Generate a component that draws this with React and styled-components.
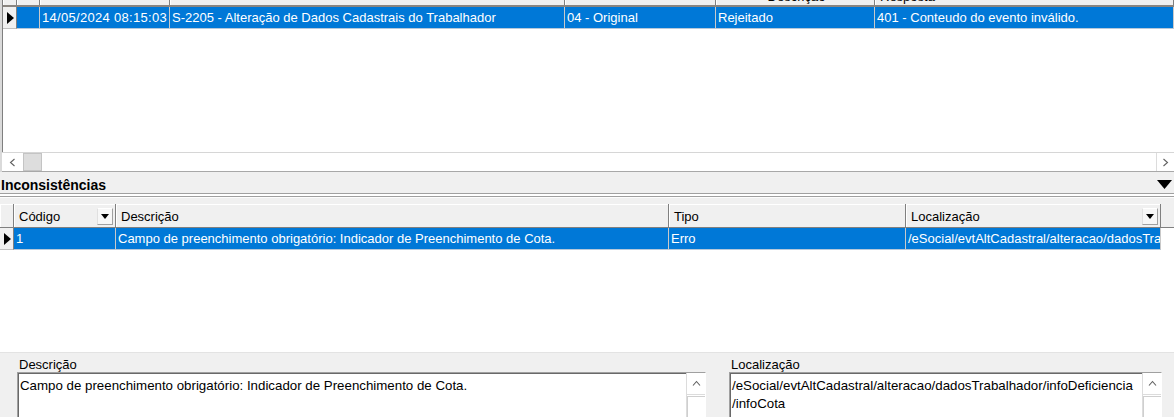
import React from 'react';
import styled, { createGlobalStyle } from 'styled-components';

const BLUE = '#0078d7';
const TOP_COLS = '14px 23px 130px 395px 151px 159px 1fr';
const INC_COLS = '14px 102px 553px 237px 255px 1fr';

const Global = createGlobalStyle`
  html, body { margin: 0; padding: 0; background: #f0f0f0; overflow: hidden; }
  body { font-family: "Liberation Sans", Arial, sans-serif; font-size: 13px; color: #000; }
  * { box-sizing: border-box; }
`;

const Screen = styled.div`
  width: 1174px;
  height: 417px;
  display: flex;
  flex-direction: column;
  background: #f0f0f0;
  overflow: hidden;
`;

const TopFrame = styled.div`
  height: 172px;
  flex: none;
  display: flex;
  flex-direction: column;
  border-left: 2px solid #dadada;
`;

const GridViewport = styled.div`
  flex: 1;
  display: flex;
  flex-direction: column;
  overflow: hidden;
  background: #fff;
  border-left: 1px solid #7f7f7f;
`;

const Row = styled.div`
  display: grid;
  grid-template-columns: ${p => p.$cols};
  height: 22px;
  flex: none;
`;

const HeaderRow = styled.div`
  display: grid;
  grid-template-columns: ${p => p.$cols};
  height: ${p => p.$h}px;
  margin-top: ${p => p.$offset || 0}px;
  flex: none;
  background: #f0f0f0;
  border-bottom: ${p => p.$edge}px solid ${p => (p.$edge > 1 ? '#8a8580' : '#808080')};
`;

const HeaderCell = styled.div`
  display: flex;
  align-items: center;
  justify-content: ${p => (p.$center ? 'center' : 'space-between')};
  padding: ${p => p.$pt || 0}px 2px 0 5px;
  border-right: 1px solid #808080;
  box-shadow: inset 1px 1px #fff;
  white-space: nowrap;
  overflow: hidden;
  min-width: 0;
`;

const DataCell = styled.div`
  background: ${BLUE};
  color: #fff;
  padding: 0 2px;
  line-height: 21px;
  letter-spacing: ${p => p.$spacing || 0}px;
  white-space: nowrap;
  overflow: hidden;
  min-width: 0;
  border-right: 1px solid #c9c9c9;
  border-bottom: 1px solid #b6c8da;
`;

const Filler = styled.div`
  background: ${p => p.$bg || 'transparent'};
`;

const Indicator = styled.div`
  background: #f0f0f0;
  border-right: 1px solid #808080;
  border-bottom: 1px solid #c0c0c0;
  display: flex;
  align-items: center;
  justify-content: center;
  &::before {
    content: "";
    border-left: 7px solid #000;
    border-top: 6px solid transparent;
    border-bottom: 6px solid transparent;
    margin-left: 1px;
  }
`;

const HScroll = styled.div`
  height: 20px;
  flex: none;
  display: flex;
  background: #fff;
  border-top: 1px solid #d6d6d6;
  border-bottom: 1px solid #a8a8a8;
`;

const ScrollBtn = styled.div`
  width: ${p => p.$w}px;
  flex: none;
  display: flex;
  align-items: center;
  justify-content: center;
  background: #fff;
  border-left: ${p => (p.$edge ? '1px solid #dcdcdc' : 'none')};
`;

const HThumb = styled.div`
  width: 19px;
  flex: none;
  background: #dddddd;
  border: 1px solid #c4c4c4;
`;

const Track = styled.div`
  flex: 1;
`;

const SectionBar = styled.div`
  height: 21px;
  flex: none;
  display: flex;
  align-items: center;
  justify-content: space-between;
  padding: 4px 2px 0 1px;
  font-weight: bold;
  font-size: 14px;
`;

const Splitter = styled.div`
  height: 11px;
  flex: none;
  background: linear-gradient(#a0a0a0 0 1px, #fff 1px 3px, #a0a0a0 3px 4px, #fdfdfd 4px 5px, #f0f0f0 5px);
`;

const IncGrid = styled.div`
  height: 148px;
  flex: none;
  display: flex;
  flex-direction: column;
  background: #fff;
  overflow: hidden;
`;

const DropBtn = styled.span`
  width: 16px;
  height: 17px;
  flex: none;
  display: flex;
  align-items: center;
  justify-content: center;
  background: #f7f7f7;
  border: 1px solid;
  border-color: #fff #a0a0a0 #a0a0a0 #e0e0e0;
  &::after {
    content: "";
    border-top: 5px solid #000;
    border-left: 4px solid transparent;
    border-right: 4px solid transparent;
  }
`;

const BottomPanel = styled.div`
  flex: 1;
  display: grid;
  grid-template-columns: 689px 433px;
  column-gap: 23px;
  align-content: start;
  padding: 4px 0 0 17px;
  border-top: 1px solid #e3e3e3;
`;

const Field = styled.div`
  display: flex;
  flex-direction: column;
`;

const FieldLabel = styled.div`
  height: 15px;
  line-height: 15px;
  padding-left: 2px;
`;

const Memo = styled.div`
  height: 64px;
  display: flex;
  background: #fff;
  border: 1px solid;
  border-color: #a0a0a0 #fff #fff #a0a0a0;
  box-shadow: inset 1px 1px #696969;
`;

const MemoText = styled.div`
  flex: 1;
  padding: 4px 2px 0 2px;
  font-size: 13.3px;
  line-height: 18px;
  white-space: nowrap;
  overflow: hidden;
`;

const VScroll = styled.div`
  width: 19px;
  flex: none;
  display: flex;
  flex-direction: column;
  background: #fff;
  border-left: 1px solid #dcdcdc;
`;

const UpBtn = styled.div`
  height: 22px;
  flex: none;
  display: flex;
  align-items: center;
  justify-content: center;
  border-bottom: 1px solid #dcdcdc;
`;

const VThumb = styled.div`
  flex: 1;
  margin-top: 1px;
  border-top: 1px solid #cfcfcf;
  border-left: 1px solid #cfcfcf;
  background: #fff;
`;

const Chevron = ({ dir }) => {
  const paths = {
    left: 'M5.5 1 L1.5 4.5 L5.5 8',
    right: 'M1.5 1 L5.5 4.5 L1.5 8',
    up: 'M1 5.5 L4.5 1.5 L8 5.5',
  };
  const vertical = dir === 'up';
  return (
    <svg width={vertical ? 9 : 7} height={vertical ? 7 : 9} viewBox={vertical ? '0 0 9 7' : '0 0 7 9'}>
      <path d={paths[dir]} fill="none" stroke="#606060" strokeWidth="1.1" />
    </svg>
  );
};

const DownTriangle = () => (
  <svg width="15" height="9" viewBox="0 0 15 9">
    <polygon points="0,0 15,0 7.5,9" fill="#000" />
  </svg>
);

const topHeaders = ['', '', '', '', '', 'Descrição', 'Resposta'];
const topRow = ['', '14/05/2024 08:15:03', 'S-2205 - Alteração de Dados Cadastrais do Trabalhador', '04 - Original', 'Rejeitado', '401 - Conteudo do evento inválido.'];

const incHeaders = [
  { label: 'Código', drop: true },
  { label: 'Descrição' },
  { label: 'Tipo' },
  { label: 'Localização', drop: true },
];
const incRow = ['1', 'Campo de preenchimento obrigatório: Indicador de Preenchimento de Cota.', 'Erro', '/eSocial/evtAltCadastral/alteracao/dadosTrabalhador/infoDeficiencia/infoCota'];

export default function App() {
  return (
    <>
      <Global />
      <Screen>
        <TopFrame>
          <GridViewport>
            <HeaderRow $cols={TOP_COLS} $h={20} $offset={-13} $edge={2}>
              {topHeaders.map((h, i) => (
                <HeaderCell key={i} $center={i === 5}>{h}</HeaderCell>
              ))}
            </HeaderRow>
            <Row $cols={TOP_COLS}>
              <Indicator />
              {topRow.map((t, i) => (
                <DataCell key={i} $spacing={i === 1 ? 0.3 : 0}>{t}</DataCell>
              ))}
            </Row>
          </GridViewport>
          <HScroll>
            <ScrollBtn $w={21}><Chevron dir="left" /></ScrollBtn>
            <HThumb />
            <Track />
            <ScrollBtn $w={18} $edge><Chevron dir="right" /></ScrollBtn>
          </HScroll>
        </TopFrame>

        <SectionBar>
          <span>Inconsistências</span>
          <DownTriangle />
        </SectionBar>
        <Splitter />

        <IncGrid>
          <HeaderRow $cols={INC_COLS} $h={24} $edge={1}>
            <HeaderCell $pt={2} />
            {incHeaders.map(h => (
              <HeaderCell key={h.label} $pt={2}>
                <span>{h.label}</span>
                {h.drop && <DropBtn />}
              </HeaderCell>
            ))}
            <Filler $bg="#f0f0f0" />
          </HeaderRow>
          <Row $cols={INC_COLS}>
            <Indicator />
            {incRow.map((t, i) => (
              <DataCell key={i}>{t}</DataCell>
            ))}
            <Filler />
          </Row>
        </IncGrid>

        <BottomPanel>
          <Field>
            <FieldLabel>Descrição</FieldLabel>
            <Memo>
              <MemoText>Campo de preenchimento obrigatório: Indicador de Preenchimento de Cota.</MemoText>
              <VScroll>
                <UpBtn><Chevron dir="up" /></UpBtn>
                <VThumb />
              </VScroll>
            </Memo>
          </Field>
          <Field>
            <FieldLabel>Localização</FieldLabel>
            <Memo>
              <MemoText>
                /eSocial/evtAltCadastral/alteracao/dadosTrabalhador/infoDeficiencia
                <br />
                /infoCota
              </MemoText>
              <VScroll>
                <UpBtn><Chevron dir="up" /></UpBtn>
                <VThumb />
              </VScroll>
            </Memo>
          </Field>
        </BottomPanel>
      </Screen>
    </>
  );
}
